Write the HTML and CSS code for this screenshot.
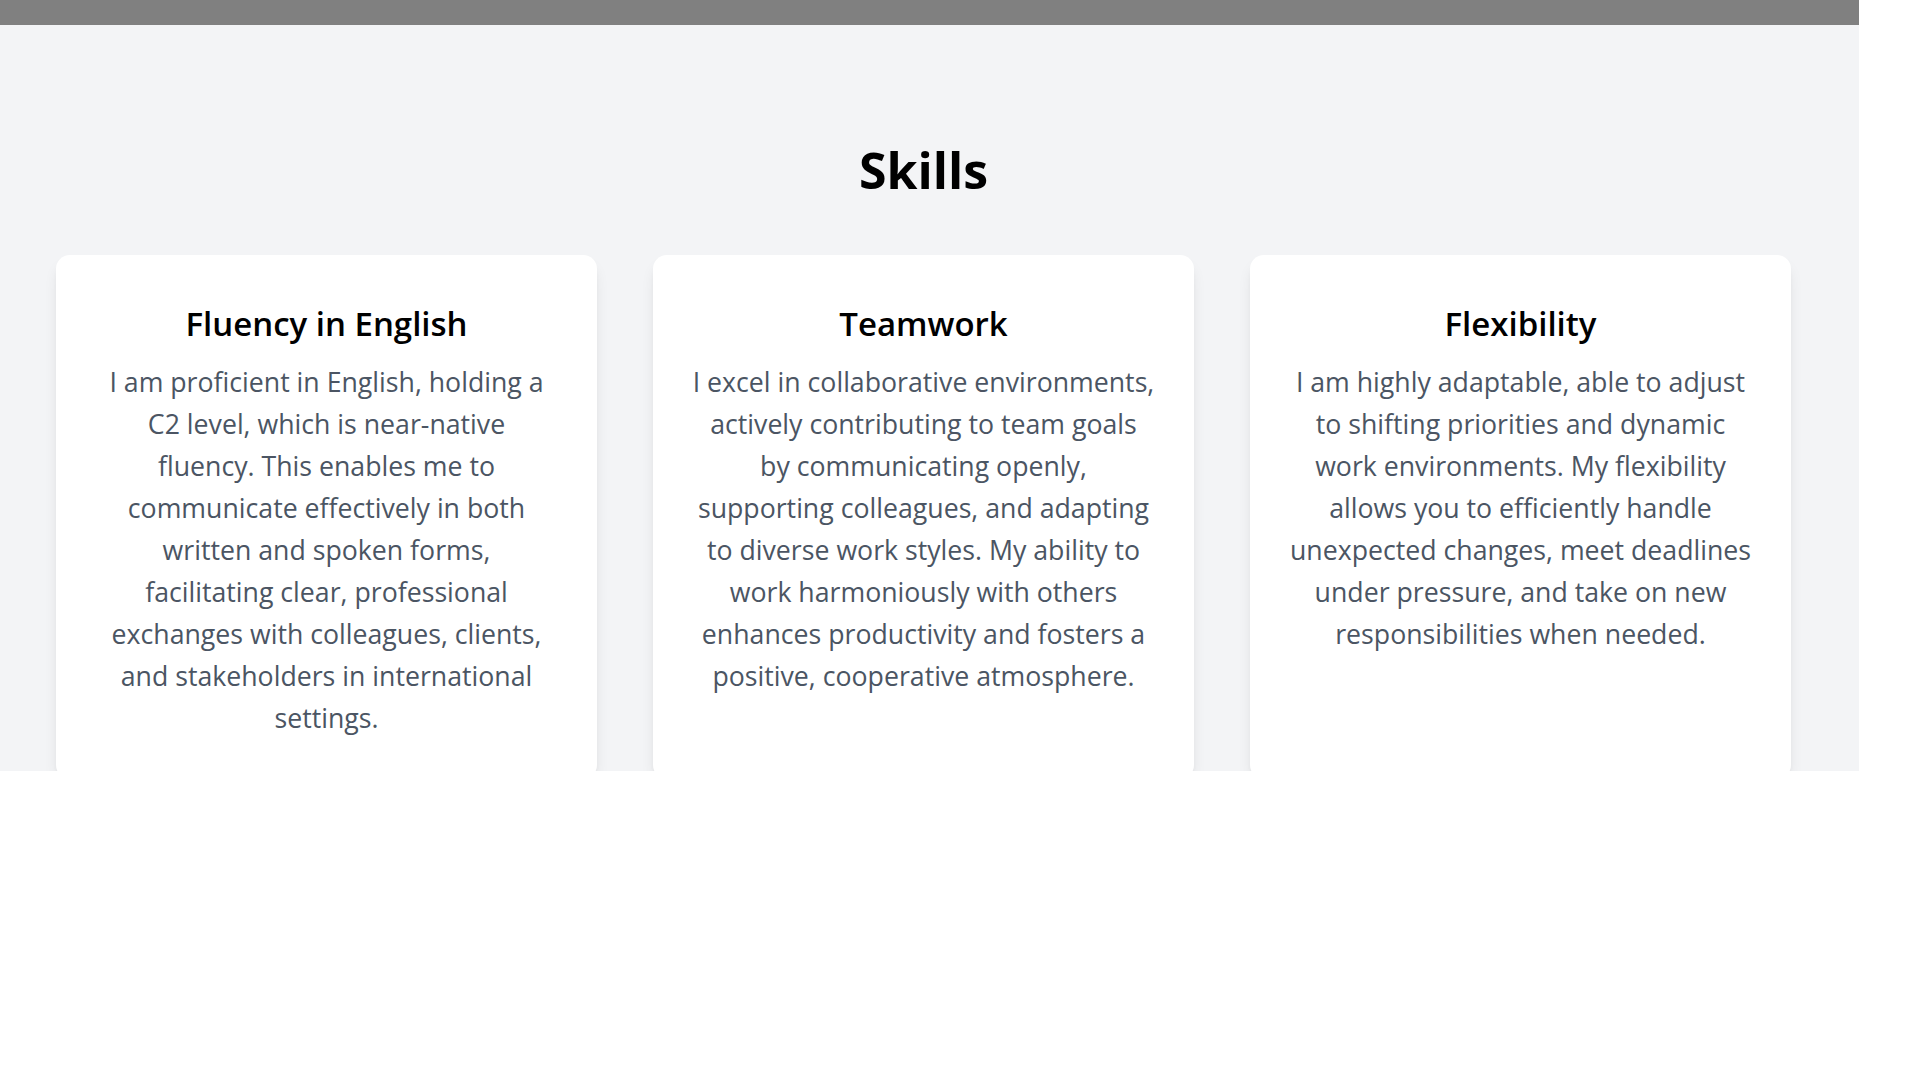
FILE: index.html
```html
<!DOCTYPE html>
<html lang="en">
<head>
<meta charset="utf-8">
<title>Skills</title>
<link rel="stylesheet" href="styles.css">
</head>
<body>
<div class="page">
  <div class="topbar"></div>
  <section class="skills">
    <h2 class="skills-title">Skills</h2>
    <div class="skills-grid">
      <article class="card">
        <h3 class="card-title">Fluency in English</h3>
        <p class="card-text">I am proficient in English, holding a<br>C2 level, which is near-native<br>fluency. This enables me to<br>communicate effectively in both<br>written and spoken forms,<br>facilitating clear, professional<br>exchanges with colleagues, clients,<br>and stakeholders in international<br>settings.</p>
      </article>
      <article class="card">
        <h3 class="card-title">Teamwork</h3>
        <p class="card-text">I excel in collaborative environments,<br>actively contributing to team goals<br>by communicating openly,<br>supporting colleagues, and adapting<br>to diverse work styles. My ability to<br>work harmoniously with others<br>enhances productivity and fosters a<br>positive, cooperative atmosphere.</p>
      </article>
      <article class="card">
        <h3 class="card-title">Flexibility</h3>
        <p class="card-text">I am highly adaptable, able to adjust<br>to shifting priorities and dynamic<br>work environments. My flexibility<br>allows you to efficiently handle<br>unexpected changes, meet deadlines<br>under pressure, and take on new<br>responsibilities when needed.</p>
      </article>
    </div>
  </section>
</div>
</body>
</html>
```
FILE: styles.css
```css
* { box-sizing: border-box; }
html, body { margin: 0; padding: 0; background: #ffffff; }
body { font-family: "Open Sans", "Noto Sans", sans-serif; }

.page {
  width: 1859px;
  height: 771px;
  overflow: hidden;
  display: flex;
  flex-direction: column;
}

.topbar {
  height: 25px;
  background: #808080;
  flex: none;
}

.skills {
  flex: 1;
  background: #f3f4f6;
  padding: 114px 68px 0 56px;
}

.skills-title {
  margin: 0 0 54px;
  text-align: center;
  font-size: 50px;
  line-height: 62px;
  font-weight: 700;
  color: #000;
}

.skills-grid {
  display: grid;
  grid-template-columns: repeat(3, 1fr);
  gap: 56px;
}

.card {
  background: #fff;
  border-radius: 14px;
  padding: 47px 30px 40px;
  box-shadow: 0 10px 15px -3px rgba(0,0,0,0.1), 0 4px 6px -4px rgba(0,0,0,0.1);
  text-align: center;
}

.card-title {
  margin: 0 0 15px;
  font-size: 33px;
  line-height: 44px;
  font-weight: 600;
  color: #000;
}

.card-text {
  margin: 0;
  font-size: 26.7px;
  line-height: 42px;
  color: #4b5563;
  white-space: nowrap;
}
```
